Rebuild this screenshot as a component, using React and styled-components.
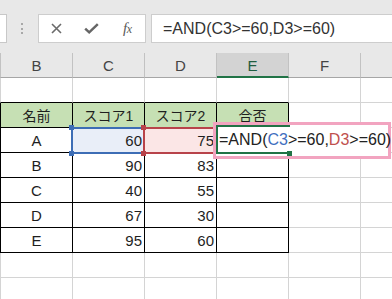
import React from "react";
import styled, { createGlobalStyle } from "styled-components";

const GlobalStyle = createGlobalStyle`
  html, body { margin: 0; padding: 0; background: #ffffff; }
  body { width: 392px; height: 299px; overflow: hidden; font-family: "Liberation Sans", "Noto Sans CJK JP", sans-serif; }
`;

const GREEN = "#217346";
const GRID = "#d4d4d4";
const BLUE = "#3d6db5";
const RED = "#b8434a";
const PINK = "#f2a4c0";

const Page = styled.div`
  width: 392px;
  height: 299px;
  overflow: hidden;
  background: #ffffff;
`;

const Toolbar = styled.div`
  display: flex;
  align-items: flex-start;
  height: 53px;
  padding-top: 14px;
  box-sizing: border-box;
  background: #e8e8e8;
`;

const NameBox = styled.div`
  width: 7px;
  height: 29px;
  box-sizing: border-box;
  background: #fff;
  border: 1px solid #c8c8c8;
  border-left: none;
  flex: none;
`;

const Grip = styled.div`
  display: flex;
  flex-direction: column;
  gap: 2.5px;
  margin-left: 14px;
  padding-top: 9px;
  flex: none;
`;

const Dot = styled.span`
  width: 2px;
  height: 2px;
  background: #a8a8a8;
`;

const ButtonGroup = styled.div`
  display: flex;
  margin-left: 15px;
  width: 108px;
  height: 29px;
  box-sizing: border-box;
  background: #fff;
  border: 1px solid #cdcdcd;
  flex: none;
`;

const ToolButton = styled.div`
  flex: 1;
  display: flex;
  align-items: center;
  justify-content: center;
  color: #6a6a6a;
`;

const Fx = styled.span`
  font-family: "Liberation Serif", "DejaVu Serif", serif;
  font-style: italic;
  font-size: 15px;
  color: #5a5a5a;
  letter-spacing: -0.5px;
  line-height: 1;
  & > small { font-size: 12px; }
`;

const FormulaBox = styled.div`
  flex: 1;
  margin-left: 5px;
  height: 29px;
  box-sizing: border-box;
  background: #fff;
  border: 1px solid #cdcdcd;
  border-right: none;
  padding-left: 11px;
  font-size: 16px;
  line-height: 27px;
  color: #333;
  white-space: nowrap;
`;

const Sheet = styled.div`
  display: grid;
  grid-template-columns: 73px repeat(5, 72px);
  grid-auto-rows: 25px;
  width: 433px;
`;

const ColHeader = styled.div`
  box-sizing: border-box;
  background: ${(p) => (p.$active ? "#d3d3d3" : "#e8e8e8")};
  border-right: 1px solid #c2c2c2;
  border-left: ${(p) => (p.$first ? "1px solid #c2c2c2" : "none")};
  border-bottom: ${(p) => (p.$active ? `2px solid ${GREEN}` : "1px solid #a6a6a6")};
  display: flex;
  align-items: center;
  justify-content: center;
  font-size: 15px;
  color: ${(p) => (p.$active ? "#1f5d40" : "#444")};
  padding-top: ${(p) => (p.$active ? "1px" : "0")};
`;

const Cell = styled.div`
  position: relative;
  box-sizing: border-box;
  height: 25px;
  background: ${(p) => p.$fill || "#fff"};
  border-right: 1px solid ${(p) => p.$right};
  border-bottom: 1px solid ${(p) => p.$bottom};
  border-left: ${(p) => (p.$left ? `1px solid ${p.$left}` : "none")};
  display: flex;
  align-items: center;
  justify-content: ${(p) => p.$align};
  padding-right: ${(p) => (p.$align === "flex-end" ? "2px" : "0")};
  font-size: ${(p) => (p.$head ? "14px" : "15px")};
  color: #1e1e1e;
  white-space: nowrap;
`;

const RangeBox = styled.div`
  position: absolute;
  top: -1px;
  left: -2px;
  right: ${(p) => p.$right};
  bottom: -2px;
  border: 2px solid ${(p) => p.$color};
  z-index: 1;
  pointer-events: none;
`;

const Handle = styled.span`
  position: absolute;
  width: 5px;
  height: 5px;
  background: ${(p) => p.$color};
  ${(p) => (p.$top ? "top: -4px;" : "bottom: -4px;")}
  ${(p) => (p.$leftSide ? "left: -4px;" : "right: -4px;")}
`;

const EditBox = styled.div`
  position: absolute;
  left: -4px;
  top: -6px;
  width: 178px;
  height: 37px;
  box-sizing: border-box;
  border: 3px solid ${PINK};
  background: #fff;
  z-index: 2;
  padding-left: 3px;
  font-size: 16px;
  line-height: 30px;
  color: #222;
  white-space: nowrap;
`;

const RefText = styled.span`
  color: ${(p) => p.$color};
`;

const ActiveBox = styled.div`
  position: absolute;
  left: -1px;
  top: -3px;
  right: -2px;
  bottom: -2px;
  border: 2px solid ${GREEN};
  border-right: none;
  z-index: 3;
  pointer-events: none;
`;

const FillHandle = styled.span`
  position: absolute;
  right: -2px;
  bottom: -4px;
  width: 5px;
  height: 5px;
  background: ${GREEN};
`;

const columns = ["B", "C", "D", "E", "F", ""];

const rows = [
  ["", "", "", "", "", ""],
  ["名前", "スコア1", "スコア2", "合否", "", ""],
  ["A", "60", "75", "", "", ""],
  ["B", "90", "83", "", "", ""],
  ["C", "40", "55", "", "", ""],
  ["D", "67", "30", "", "", ""],
  ["E", "95", "60", "", "", ""],
  ["", "", "", "", "", ""],
  ["", "", "", "", "", ""],
];

const XIcon = () => (
  <svg width="11" height="11" viewBox="0 0 11 11">
    <path d="M1 1 L10 10 M10 1 L1 10" stroke="#6a6a6a" strokeWidth="1.6" fill="none" />
  </svg>
);

const CheckIcon = () => (
  <svg width="15" height="11" viewBox="0 0 15 11">
    <path d="M1.2 5.6 L5.2 9.3 L13.8 1.2" stroke="#666" strokeWidth="2.5" fill="none" strokeLinejoin="miter" />
  </svg>
);

function renderCell(r, c, value) {
  const inTable = r >= 1 && r <= 6 && c <= 3;
  const right = inTable ? "#000" : GRID;
  const bottom = inTable || (r === 0 && c <= 3) ? "#000" : GRID;
  const left = c === 0 ? (inTable ? "#000" : GRID) : null;
  const head = r === 1 && c <= 3;
  const numeric = r >= 2 && (c === 1 || c === 2);
  const align = numeric ? "flex-end" : "center";
  let fill = head ? "#c6e0b4" : null;
  let overlay = null;

  if (r === 2 && c === 1) {
    fill = "#e9eef8";
    overlay = (
      <RangeBox $color={BLUE} $right="-1px">
        <Handle $color={BLUE} $top $leftSide />
        <Handle $color={BLUE} $leftSide />
      </RangeBox>
    );
  }
  if (r === 2 && c === 2) {
    fill = "#fbe6e6";
    overlay = (
      <RangeBox $color={RED} $right="-2px">
        <Handle $color={RED} $top $leftSide />
        <Handle $color={RED} $leftSide />
        <Handle $color={RED} $top />
        <Handle $color={RED} />
      </RangeBox>
    );
  }
  if (r === 2 && c === 3) {
    overlay = (
      <>
        <EditBox>
          =AND(<RefText $color="#3f6fc0">C3</RefText>&gt;=60,<RefText $color="#c0504d">D3</RefText>&gt;=60)
        </EditBox>
        <ActiveBox>
          <FillHandle />
        </ActiveBox>
      </>
    );
  }

  return (
    <Cell
      key={`${r}-${c}`}
      $right={right}
      $bottom={bottom}
      $left={left}
      $fill={fill}
      $align={align}
      $head={head}
    >
      {value}
      {overlay}
    </Cell>
  );
}

export default function App() {
  return (
    <Page>
      <GlobalStyle />
      <Toolbar>
        <NameBox />
        <Grip>
          <Dot />
          <Dot />
          <Dot />
        </Grip>
        <ButtonGroup>
          <ToolButton>
            <XIcon />
          </ToolButton>
          <ToolButton>
            <CheckIcon />
          </ToolButton>
          <ToolButton>
            <Fx>
              f<small>x</small>
            </Fx>
          </ToolButton>
        </ButtonGroup>
        <FormulaBox>=AND(C3&gt;=60,D3&gt;=60)</FormulaBox>
      </Toolbar>
      <Sheet>
        {columns.map((col, i) => (
          <ColHeader key={`h${i}`} $first={i === 0} $active={col === "E"}>
            {col}
          </ColHeader>
        ))}
        {rows.map((row, r) => row.map((value, c) => renderCell(r, c, value)))}
      </Sheet>
    </Page>
  );
}
